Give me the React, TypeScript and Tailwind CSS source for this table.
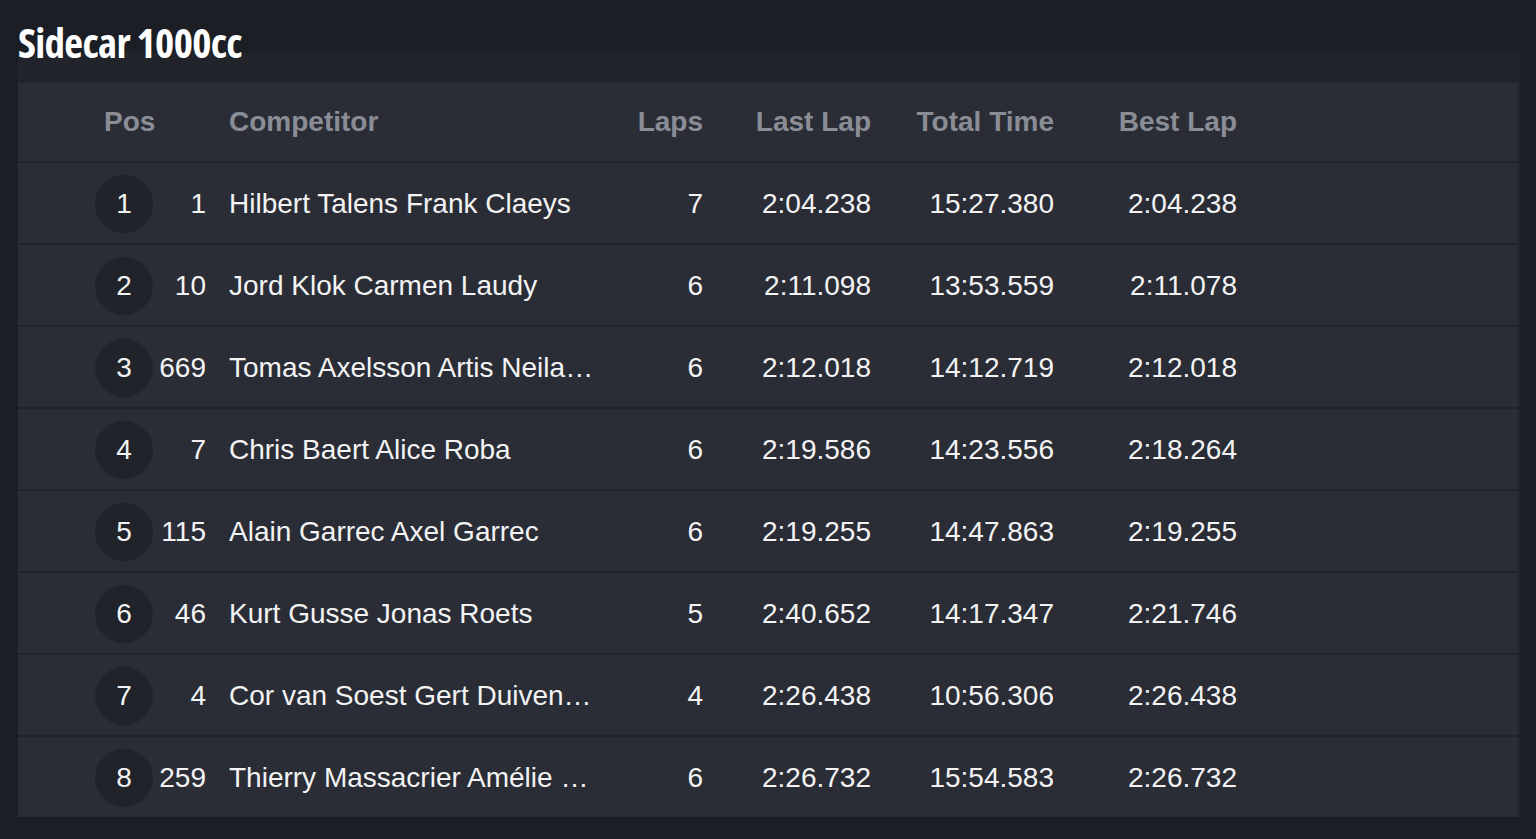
import React from "react";

interface Result {
  pos: number;
  bib: string;
  name: string;
  laps: number;
  lastLap: string;
  totalTime: string;
  bestLap: string;
}

const results: Result[] = [
  { pos: 1, bib: "1", name: "Hilbert Talens Frank Claeys", laps: 7, lastLap: "2:04.238", totalTime: "15:27.380", bestLap: "2:04.238" },
  { pos: 2, bib: "10", name: "Jord Klok Carmen Laudy", laps: 6, lastLap: "2:11.098", totalTime: "13:53.559", bestLap: "2:11.078" },
  { pos: 3, bib: "669", name: "Tomas Axelsson Artis Neilands", laps: 6, lastLap: "2:12.018", totalTime: "14:12.719", bestLap: "2:12.018" },
  { pos: 4, bib: "7", name: "Chris Baert Alice Roba", laps: 6, lastLap: "2:19.586", totalTime: "14:23.556", bestLap: "2:18.264" },
  { pos: 5, bib: "115", name: "Alain Garrec Axel Garrec", laps: 6, lastLap: "2:19.255", totalTime: "14:47.863", bestLap: "2:19.255" },
  { pos: 6, bib: "46", name: "Kurt Gusse Jonas Roets", laps: 5, lastLap: "2:40.652", totalTime: "14:17.347", bestLap: "2:21.746" },
  { pos: 7, bib: "4", name: "Cor van Soest Gert Duivenvoorden", laps: 4, lastLap: "2:26.438", totalTime: "10:56.306", bestLap: "2:26.438" },
  { pos: 8, bib: "259", name: "Thierry Massacrier Amélie Massacrier", laps: 6, lastLap: "2:26.732", totalTime: "15:54.583", bestLap: "2:26.732" },
];

const ResultRow: React.FC<{ r: Result }> = ({ r }) => (
  <div className="flex items-center h-[82px] pt-[2px] border-t-2 border-[#202329] text-[28px] text-[#f3f3f3]">
    <div className="w-[211px] flex items-center pl-[77px] pr-[23px]">
      <div className="w-[58px] h-[58px] rounded-full bg-[#202329] flex items-center justify-center shrink-0">
        {r.pos}
      </div>
      <div className="flex-1 text-right whitespace-nowrap">{r.bib}</div>
    </div>
    <div className="w-[371px] truncate pr-[6px]">{r.name}</div>
    <div className="w-[103px] text-right">{r.laps}</div>
    <div className="w-[168px] text-right">{r.lastLap}</div>
    <div className="w-[183px] text-right">{r.totalTime}</div>
    <div className="w-[183px] text-right">{r.bestLap}</div>
  </div>
);

export default function App() {
  return (
    <div className="min-h-[839px] bg-[#1b1e25] pl-[18px] font-['Liberation_Sans',Arial,sans-serif]">
      <div className="h-[53px] pt-[21px]">
        <h2 className="font-['Open_Sans',sans-serif] font-bold font-stretch-condensed text-[41px] leading-[42px] tracking-[-0.7px] text-white whitespace-nowrap">
          Sidecar 1000cc
        </h2>
      </div>
      <div className="w-[1502px] bg-[#21242b] pt-[30px]">
        <div className="w-[1500px] bg-[#2a2d36]">
          <div className="flex items-center h-[78px] text-[28px] font-bold text-[#8a8d95]">
            <div className="w-[211px] pl-[86px]">Pos</div>
            <div className="w-[371px]">Competitor</div>
            <div className="w-[103px] text-right">Laps</div>
            <div className="w-[168px] text-right">Last Lap</div>
            <div className="w-[183px] text-right">Total Time</div>
            <div className="w-[183px] text-right">Best Lap</div>
          </div>
          {results.map((r) => (
            <ResultRow key={r.pos} r={r} />
          ))}
        </div>
      </div>
    </div>
  );
}
